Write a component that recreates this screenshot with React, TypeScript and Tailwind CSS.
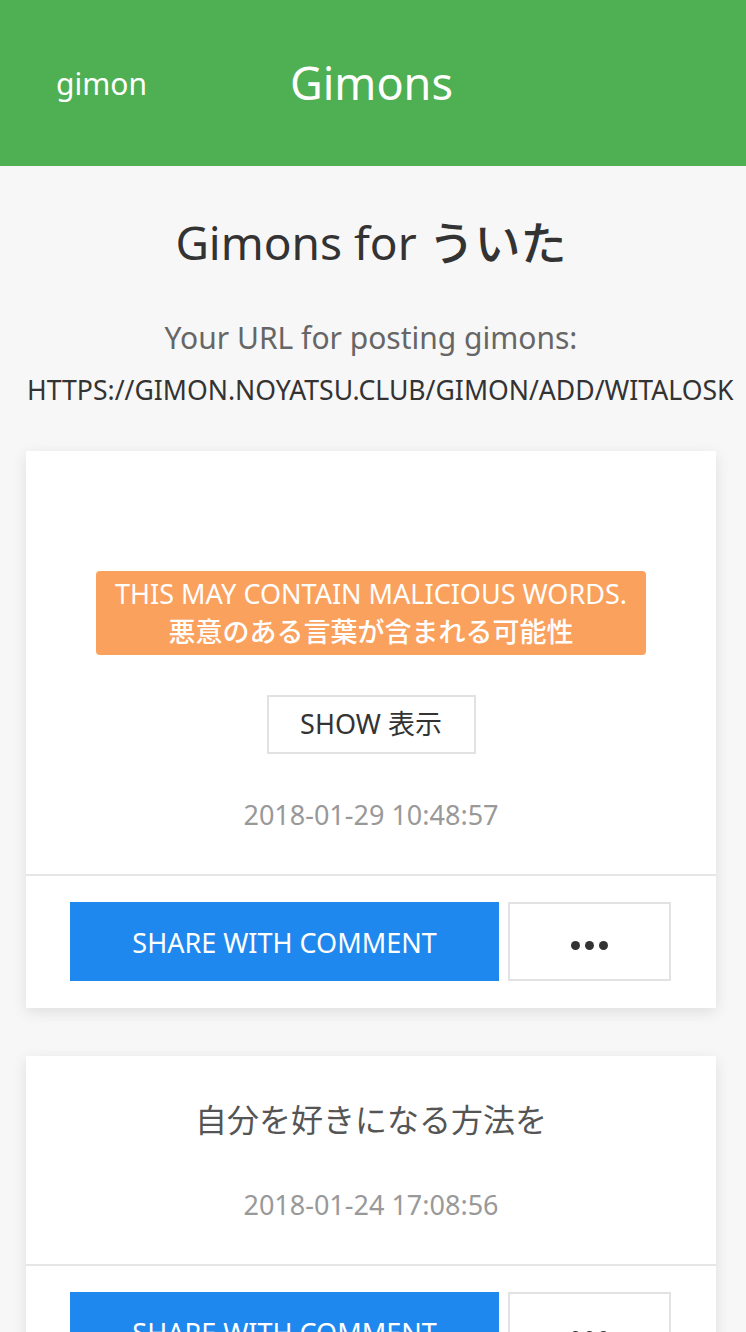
import { useState } from 'react'

const font = { fontFamily: '"Noto Sans", "Noto Sans CJK JP", sans-serif' }

type Gimon = {
  id: number
  body: string
  malicious: boolean
  createdAt: string
}

const gimons: Gimon[] = [
  { id: 1, body: '', malicious: true, createdAt: '2018-01-29 10:48:57' },
  { id: 2, body: '自分を好きになる方法を', malicious: false, createdAt: '2018-01-24 17:08:56' },
]

function GimonCard({ gimon }: { gimon: Gimon }) {
  const [shown, setShown] = useState(false)
  return (
    <div className="bg-white shadow-[0_4px_14px_rgba(0,0,0,0.1)]">
      <div className="flex flex-col items-center px-6 pt-[44px] pb-[44px] text-center">
        {gimon.malicious && !shown ? (
          <>
            <div className="mt-[76px] w-[550px] rounded-[4px] bg-[#fba15e] px-2 py-[4px] text-[27px] leading-[38px] text-white">
              <div>THIS MAY CONTAIN MALICIOUS WORDS.</div>
              <div className="font-medium">悪意のある言葉が含まれる可能性</div>
            </div>
            <button
              onClick={() => setShown(true)}
              className="mt-[40px] h-[59px] w-[209px] border-2 border-[#e2e2e2] bg-white text-[27px] text-[#333]"
            >
              SHOW 表示
            </button>
            <div className="mt-[46px] text-[27px] leading-[30px] text-[#999]">{gimon.createdAt}</div>
          </>
        ) : (
          <>
            <div className="text-[32px] leading-[40px] text-[#555]">{gimon.body}</div>
            <div className="mt-[50px] text-[27px] leading-[30px] text-[#999]">{gimon.createdAt}</div>
          </>
        )}
      </div>
      <div className="flex gap-[9px] border-t-2 border-[#e6e6e6] pt-[26px] pb-[27px] pl-[44px] pr-[45px]">
        <button className="h-[79px] flex-1 bg-[#1f88ee] pt-[3px] text-[27px] text-white">SHARE WITH COMMENT</button>
        <button className="flex h-[79px] w-[163px] items-center justify-center gap-[5px] border-2 border-[#e2e2e2] bg-white pt-[7px]">
          <span className="h-[9px] w-[9px] rounded-full bg-[#333]" />
          <span className="h-[9px] w-[9px] rounded-full bg-[#333]" />
          <span className="h-[9px] w-[9px] rounded-full bg-[#333]" />
        </button>
      </div>
    </div>
  )
}

export default function App() {
  return (
    <div className="min-h-[1332px] overflow-hidden bg-[#f7f7f7]" style={font}>
      <header className="flex h-[166px] items-center bg-[#4faf53] text-white">
        <span className="ml-[56px] text-[30px]">gimon</span>
        <span className="ml-[143px] text-[45px]">Gimons</span>
      </header>

      <main className="pl-[26px] pr-[30px]">
        <h1 className="pt-[48px] text-center text-[46px] leading-[56px] text-[#333]">
          Gimons for <span className="font-medium">ういた</span>
        </h1>
        <p className="mt-[48px] text-center text-[30px] leading-[40px] text-[#666]">Your URL for posting gimons:</p>
        <p className="mt-[14px] -mr-[30px] whitespace-nowrap pl-[1px] text-[26.6px] leading-[36px] text-[#333]">
          HTTPS://GIMON.NOYATSU.CLUB/GIMON/ADD/WITALOSK
        </p>

        <div className="mt-[43px] flex flex-col gap-[48px]">
          {gimons.map((g) => (
            <GimonCard key={g.id} gimon={g} />
          ))}
        </div>
      </main>
    </div>
  )
}
